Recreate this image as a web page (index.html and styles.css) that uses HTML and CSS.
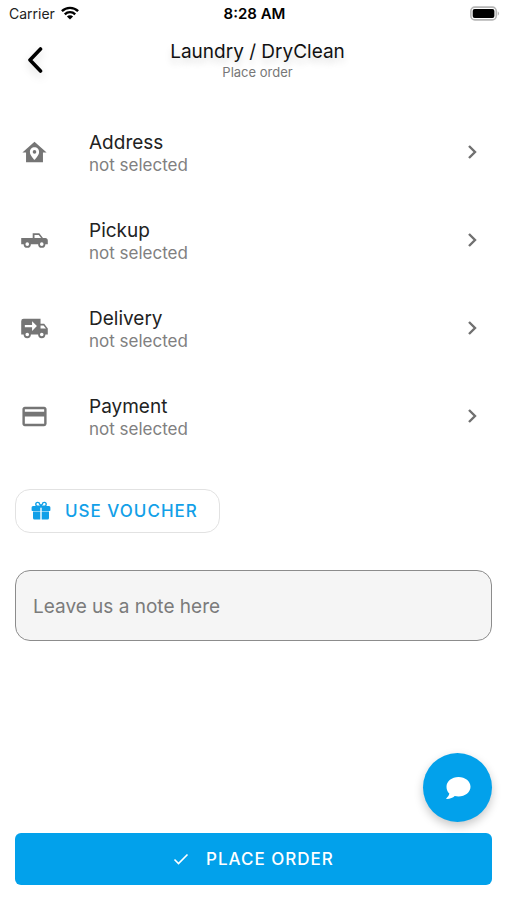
FILE: index.html
```html
<!DOCTYPE html>
<html lang="en">
<head>
<meta charset="utf-8">
<meta name="viewport" content="width=device-width, initial-scale=1">
<title>Place order</title>
<link rel="stylesheet" href="styles.css">
</head>
<body>
<div class="status">
  <div class="status-left">
    <span>Carrier</span>
    <svg class="wifi" viewBox="0 0 18 14" aria-hidden="true"><g fill="none" stroke="#000" stroke-width="2.4"><path d="M.9 5.2a11.5 11.5 0 0 1 16.2 0"/><path d="M3.8 8.3a7.4 7.4 0 0 1 10.4 0"/></g><path d="M9 13.6 5.9 10.5a4.4 4.4 0 0 1 6.2 0z"/></svg>
  </div>
  <span class="time">8:28 AM</span>
  <div class="status-right">
    <svg class="battery" viewBox="0 0 31 15" aria-hidden="true"><rect x=".9" y=".9" width="26.2" height="13.2" rx="4" fill="#fff" stroke="#b5b5b5" stroke-width="1.6"/><rect x="2.8" y="2.8" width="22.4" height="9.4" rx="2"/><path d="M28.6 5.2a2.6 2.6 0 0 1 0 4.6z" fill="#b5b5b5"/></svg>
  </div>
</div>

<header class="header">
  <button class="back" type="button" aria-label="Back">
    <svg viewBox="0 0 16 28" aria-hidden="true"><path d="M13.500 3 3 14l10.500 11" fill="none" stroke="#000" stroke-width="3.600" stroke-linecap="round" stroke-linejoin="round"/></svg>
  </button>
  <div class="heading">
    <h1>Laundry / DryClean</h1>
    <p>Place order</p>
  </div>
</header>

<main class="main">
  <nav class="options" aria-label="Order details">
    <a class="option" href="#address">
      <svg class="icon" viewBox="0 0 24 24" aria-hidden="true"><path fill-rule="evenodd" d="M12,3L2,12H5V20H19V12H22L12,3M12,7.7C14.1,7.7 15.8,9.4 15.8,11.5C15.8,14.5 12,18 12,18C12,18 8.2,14.5 8.2,11.5C8.2,9.4 9.9,7.7 12,7.7M12,10A1.5,1.5 0 0,0 10.5,11.5A1.5,1.5 0 0,0 12,13A1.5,1.5 0 0,0 13.5,11.5A1.5,1.5 0 0,0 12,10Z"/></svg>
      <span class="label"><span class="name">Address</span><span class="value">not selected</span></span>
      <svg class="chevron" viewBox="0 0 12 16" aria-hidden="true"><path d="m3 2 6 6-6 6"/></svg>
    </a>
    <a class="option" href="#pickup">
      <svg class="icon" viewBox="0 0 24 24" aria-hidden="true"><path fill-rule="evenodd" d="M16,6H10.5V10H1V15H3A3,3 0 0,0 6,18A3,3 0 0,0 9,15H15A3,3 0 0,0 18,18A3,3 0 0,0 21,15H23V12C23,10.89 22.11,10 21,10H19L16,6M12,7.5H15.5L17.46,10H12V7.5M6,13.5A1.5,1.5 0 0,1 7.5,15A1.5,1.5 0 0,1 6,16.5A1.5,1.5 0 0,1 4.5,15A1.5,1.5 0 0,1 6,13.5M18,13.5A1.5,1.5 0 0,1 19.5,15A1.5,1.5 0 0,1 18,16.5A1.5,1.5 0 0,1 16.5,15A1.5,1.5 0 0,1 18,13.5Z"/></svg>
      <span class="label"><span class="name">Pickup</span><span class="value">not selected</span></span>
      <svg class="chevron" viewBox="0 0 12 16" aria-hidden="true"><path d="m3 2 6 6-6 6"/></svg>
    </a>
    <a class="option" href="#delivery">
      <svg class="icon" viewBox="0 0 24 24" aria-hidden="true"><path fill-rule="evenodd" d="M3,4A2,2 0 0,0 1,6V17H3A3,3 0 0,0 6,20A3,3 0 0,0 9,17H15A3,3 0 0,0 18,20A3,3 0 0,0 21,17H23V12L20,8H17V4H3M10,6L14,10L10,14V11H4V9H10V6M17,9.5H19.5L21.47,12H17V9.5M6,15.5A1.5,1.5 0 0,1 7.5,17A1.5,1.5 0 0,1 6,18.5A1.5,1.5 0 0,1 4.5,17A1.5,1.5 0 0,1 6,15.5M18,15.5A1.5,1.5 0 0,1 19.5,17A1.5,1.5 0 0,1 18,18.5A1.5,1.5 0 0,1 16.5,17A1.5,1.5 0 0,1 18,15.5Z"/></svg>
      <span class="label"><span class="name">Delivery</span><span class="value">not selected</span></span>
      <svg class="chevron" viewBox="0 0 12 16" aria-hidden="true"><path d="m3 2 6 6-6 6"/></svg>
    </a>
    <a class="option" href="#payment">
      <svg class="icon" viewBox="0 0 24 24" aria-hidden="true"><path fill-rule="evenodd" d="M20,8H4V6H20V8M20,18H4V12H20V18M20,4H4C2.89,4 2,4.89 2,6V18C2,19.1 2.89,20 4,20H20A2,2 0 0,0 22,18V6C22,4.89 21.1,4 20,4Z"/></svg>
      <span class="label"><span class="name">Payment</span><span class="value">not selected</span></span>
      <svg class="chevron" viewBox="0 0 12 16" aria-hidden="true"><path d="m3 2 6 6-6 6"/></svg>
    </a>
  </nav>

  <button class="voucher" type="button">
    <svg viewBox="0 0 20 20" aria-hidden="true"><g fill="currentColor"><path d="M2 5h7.300v5H1.500A.9.9 0 0 1 .6 9V6.500A1.500 1.500 0 0 1 2 5zM10.700 5H18a1.500 1.500 0 0 1 1.400 1.500V9a.9.9 0 0 1-.9 1h-7.800zM2 10.600h7.300v7.900H3.500A1.500 1.500 0 0 1 2 17zM10.700 10.600H18v6.400a1.500 1.500 0 0 1-1.500 1.500h-5.800z"/><path d="M9.300 5h1.400v2H9.300z"/></g><path d="M10 5.200H6.700a1.900 1.900 0 1 1 1.900-2c.7.400 1.400 1.200 1.400 2zm0 0h3.300a1.900 1.900 0 1 0-1.900-2c-.7.400-1.400 1.200-1.400 2z" fill="none" stroke="currentColor" stroke-width="1.400"/></svg>
    <span>USE VOUCHER</span>
  </button>

  <input class="note" type="text" placeholder="Leave us a note here" aria-label="Note">
</main>

<footer class="footer">
  <button class="order" type="button">
    <svg viewBox="0 0 16 12" aria-hidden="true"><path d="m1.500 6.500 4 4 9-9" fill="none" stroke="currentColor" stroke-width="1.600"/></svg>
    <span>PLACE ORDER</span>
  </button>
  <button class="chat" type="button" aria-label="Chat">
    <svg viewBox="0 0 26 24" aria-hidden="true"><path d="M13.500 1C20.200 1 25.500 5.400 25.500 10.800s-5.300 9.700-12 9.700c-1.300 0-2.600-.2-3.800-.5-1.700 1.600-4.400 2.900-7.900 3-.5 0-.7-.5-.4-.8 1.600-1.300 2.700-2.800 2.900-4.600C2.500 15.900 1.500 13.500 1.500 10.800 1.500 5.400 6.800 1 13.500 1z" fill="#fff"/></svg>
  </button>
</footer>
</body>
</html>
```
FILE: styles.css
```css
* {
  box-sizing: border-box;
}

body {
  margin: 0;
  min-height: 100vh;
  display: flex;
  flex-direction: column;
  background: #fff;
  color: #222;
  font-family: Inter, "Liberation Sans", sans-serif;
}

button,
input {
  font: inherit;
}

button {
  cursor: pointer;
}

svg {
  display: block;
  flex: none;
}

.status {
  display: grid;
  grid-template-columns: 1fr auto 1fr;
  align-items: center;
  height: 26px;
  padding: 0 7px 0 9px;
  font-size: 14px;
}

.status-left {
  display: flex;
  align-items: center;
  gap: 6px;
}

.wifi {
  width: 18px;
  height: 14px;
}

.time {
  color: #000;
  font-size: 15px;
  font-weight: 600;
}

.status-right {
  display: flex;
  justify-content: flex-end;
}

.battery {
  width: 30px;
  height: 15px;
}

.header {
  display: grid;
  grid-template-columns: 40px 1fr 32px;
  align-items: center;
  height: 68px;
  padding: 0 15px;
}

.back {
  display: flex;
  justify-content: center;
  padding: 0;
  border: 0;
  background: none;
}

.back svg {
  width: 16px;
  height: 28px;
  filter: drop-shadow(0 4px 4px rgba(0, 0, 0, 0.15));
}

.heading {
  text-align: center;
}

.heading h1 {
  margin: 0;
  color: #111;
  font-size: 19px;
  font-weight: 400;
  line-height: 24px;
  text-shadow: 0 5px 7px rgba(0, 0, 0, 0.15);
}

.heading p {
  margin: 0;
  color: #777;
  font-size: 13px;
  line-height: 16px;
}

.main {
  flex: 1;
  padding: 14px 15px;
}

.option {
  display: flex;
  align-items: center;
  height: 88px;
  padding: 0 14px 0 5px;
  color: inherit;
  text-decoration: none;
}

.icon {
  width: 29px;
  height: 29px;
  margin-right: 40px;
  fill: #757575;
}

.label {
  flex: 1;
  display: flex;
  flex-direction: column;
  padding-top: 3px;
}

.name {
  font-size: 19px;
  line-height: 22px;
}

.value {
  color: #808080;
  font-size: 17px;
  line-height: 22px;
}

.chevron {
  width: 12px;
  height: 16px;
  fill: none;
  stroke: #707070;
  stroke-width: 2.4;
}

.voucher {
  display: flex;
  align-items: center;
  gap: 14px;
  height: 44px;
  margin: 29px 0 37px;
  padding: 0 21px 0 15px;
  border: 1px solid #e2e2e2;
  border-radius: 15px;
  background: #fff;
  color: #12a0e8;
  font-size: 17px;
  font-weight: 500;
  letter-spacing: 1px;
}

.voucher svg {
  width: 20px;
  height: 20px;
}

.note {
  display: block;
  width: 100%;
  height: 71px;
  padding: 2px 17px 0;
  border: 1px solid #8c8c8c;
  border-radius: 15px;
  background: #f5f5f5;
  color: #222;
  font-size: 19px;
}

.note::placeholder {
  color: #7b7b7b;
  opacity: 1;
}

.footer {
  position: relative;
  padding: 0 15px 15px;
}

.order {
  display: flex;
  align-items: center;
  justify-content: center;
  gap: 17px;
  width: 100%;
  height: 52px;
  padding: 0;
  border: 0;
  border-radius: 6px;
  background: #02a1eb;
  color: #fff;
  font-size: 17px;
  font-weight: 500;
  letter-spacing: 1px;
}

.order svg {
  width: 16px;
  height: 12px;
}

.chat {
  position: absolute;
  right: 15px;
  bottom: 78px;
  display: flex;
  align-items: center;
  justify-content: center;
  width: 69px;
  height: 69px;
  padding: 0;
  border: 0;
  border-radius: 50%;
  background: #02a1eb;
  box-shadow: 0 4px 10px rgba(0, 0, 0, 0.22);
}

.chat svg {
  width: 26px;
  height: 24px;
}
```
